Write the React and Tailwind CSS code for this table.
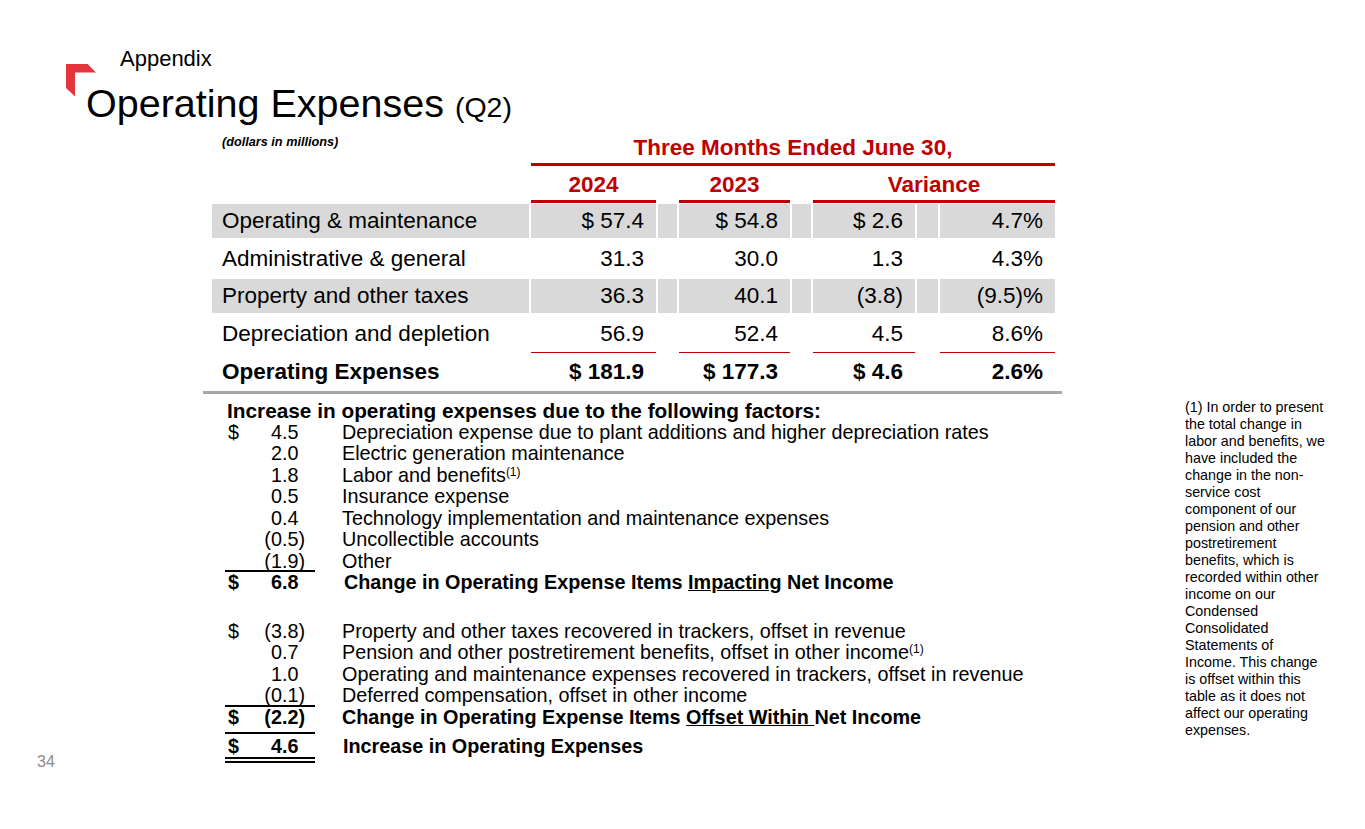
import React from 'react';

const cols = 'grid grid-cols-[317px_125px_19px_111px_19px_102px_21px_115px] gap-x-[2px]';

const rows = [
  { label: 'Operating & maintenance', v: ['$ 57.4', '$ 54.8', '$ 2.6', '4.7%'], shade: true },
  { label: 'Administrative & general', v: ['31.3', '30.0', '1.3', '4.3%'] },
  { label: 'Property and other taxes', v: ['36.3', '40.1', '(3.8)', '(9.5)%'], shade: true },
  { label: 'Depreciation and depletion', v: ['56.9', '52.4', '4.5', '8.6%'], rule: true },
];

const footnote = [
  '(1) In order to present',
  'the total change in',
  'labor and benefits, we',
  'have included the',
  'change in the non-',
  'service cost',
  'component of our',
  'pension and other',
  'postretirement',
  'benefits, which is',
  'recorded within other',
  'income on our',
  'Condensed',
  'Consolidated',
  'Statements of',
  'Income. This change',
  'is offset within this',
  'table as it does not',
  'affect our operating',
  'expenses.',
];

const Sup = () => <sup className="text-[12px]">(1)</sup>;

// one line of the bridge: "$", amount, description
function Line({ dollar, amount, neg, bold, rule, children, descPad = 'ml-[27px]', rowH = 'h-[21.5px]' }) {
  return (
    <div className={`flex ${rowH} leading-[21.5px] ${bold ? 'font-bold' : ''}`}>
      <div className={`w-[90px] ${rowH} flex justify-between pl-[3px] pr-[10px] ${rule ? 'border-b-2 border-black' : ''}`}>
        <span>{dollar ? '$' : ''}</span>
        <span>
          {amount}
          {!neg && <span className="invisible">)</span>}
        </span>
      </div>
      <div className={`${descPad} whitespace-nowrap`}>{children}</div>
    </div>
  );
}

function Cell({ children, shade, rule, first }) {
  return (
    <div
      className={`flex items-center ${first ? 'pl-[10px]' : 'justify-end pr-[12px]'} ${shade ? 'bg-[#d9d9d9]' : ''} ${rule ? 'border-b border-[#c00000]' : ''}`}
    >
      {children}
    </div>
  );
}

export default function App() {
  return (
    <div className="w-[1365px] h-[829px] bg-white overflow-hidden text-black font-['Liberation_Sans',Arial,sans-serif]">
      {/* header */}
      <div className="relative pt-[46px] pl-[86px]">
        <svg className="absolute left-[66px] top-[64px]" width="31" height="33" viewBox="0 0 31 33">
          <polygon points="0,0 21.6,0 30,8.4 9,8.4 9,32.4 0,24" fill="#e3353b" />
        </svg>
        <div className="pl-[34px] text-[22px] leading-[26px]">Appendix</div>
        <div className="mt-[8px] text-[39.5px] leading-[46px] whitespace-nowrap">
          Operating Expenses <span className="text-[28.5px]">(Q2)</span>
        </div>
      </div>

      {/* table */}
      <div className="ml-[212px] mt-[4px] w-[843px] text-[22.5px]">
        <div className={`${cols} h-[32px]`}>
          <div className="pl-[10px] text-[12.7px] leading-[16px] font-bold italic">(dollars in millions)</div>
          <div className="col-span-7 border-b-[3px] border-[#c00000] pt-[1px] text-center font-bold leading-[26px] text-[#c00000]">
            Three Months Ended June 30,
          </div>
        </div>
        <div className={`${cols} h-[37px] font-bold text-[#c00000] leading-[26px]`}>
          <div />
          <div className="pt-[6px] text-center border-b-[3px] border-[#c00000]">2024</div>
          <div />
          <div className="pt-[6px] text-center border-b-[3px] border-[#c00000]">2023</div>
          <div />
          <div className="col-span-3 pt-[6px] text-center border-b-[3px] border-[#c00000]">Variance</div>
        </div>
        {rows.map((r) => (
          <div key={r.label} className={`${cols} h-[37.5px] ${r.shade ? 'pt-[1px] pb-[2.5px]' : ''}`}>
            <Cell first shade={r.shade}>{r.label}</Cell>
            <Cell shade={r.shade} rule={r.rule}>{r.v[0]}</Cell>
            <Cell shade={r.shade} />
            <Cell shade={r.shade} rule={r.rule}>{r.v[1]}</Cell>
            <Cell shade={r.shade} />
            <Cell shade={r.shade} rule={r.rule}>{r.v[2]}</Cell>
            <Cell shade={r.shade} />
            <Cell shade={r.shade} rule={r.rule}>{r.v[3]}</Cell>
          </div>
        ))}
        <div className={`${cols} h-[37.5px] pt-[1px] font-bold`}>
          <Cell first>Operating Expenses</Cell>
          <Cell>$ 181.9</Cell>
          <Cell />
          <Cell>$ 177.3</Cell>
          <Cell />
          <Cell>$ 4.6</Cell>
          <Cell />
          <Cell>2.6%</Cell>
        </div>
        <div className="ml-[-9px] w-[859px] h-[3px] bg-[#a6a6a6]" />
      </div>

      {/* bridge + footnote */}
      <div className="flex pl-[37px]">
        <div className="w-[188px] flex flex-col justify-end text-[16px] leading-[18px] text-[#8c8c8c]">34</div>
        <div className="w-[960px] pt-[6px] pb-[8px] text-[19.8px]">
          <div className="pl-[2px] h-[22px] leading-[22px] text-[20.8px] font-bold whitespace-nowrap">
            Increase in operating expenses due to the following factors:
          </div>
          <Line dollar amount="4.5">Depreciation expense due to plant additions and higher depreciation rates</Line>
          <Line amount="2.0">Electric generation maintenance</Line>
          <Line amount="1.8">Labor and benefits<Sup /></Line>
          <Line amount="0.5">Insurance expense</Line>
          <Line amount="0.4">Technology implementation and maintenance expenses</Line>
          <Line amount="(0.5)" neg>Uncollectible accounts</Line>
          <Line amount="(1.9)" neg rule>Other</Line>
          <Line dollar amount="6.8" bold descPad="ml-[29px]">
            Change in Operating Expense Items <span className="underline">Impacting</span> Net Income
          </Line>

          <div className="h-[27px]" />

          <Line dollar amount="(3.8)" neg>Property and other taxes recovered in trackers, offset in revenue</Line>
          <Line amount="0.7">Pension and other postretirement benefits, offset in other income<Sup /></Line>
          <Line amount="1.0">Operating and maintenance expenses recovered in trackers, offset in revenue</Line>
          <Line amount="(0.1)" neg rule>Deferred compensation, offset in other income</Line>
          <Line dollar amount="(2.2)" neg bold rule rowH="h-[27px]">
            Change in Operating Expense Items <span className="underline">Offset Within </span>Net Income
          </Line>
          <div className="flex pt-[2px] leading-[21.5px] font-bold">
            <div className="w-[90px] h-[27.5px] flex justify-between pl-[3px] pr-[10px] border-b-[6px] border-double border-black">
              <span>$</span>
              <span>
                4.6<span className="invisible">)</span>
              </span>
            </div>
            <div className="ml-[28px] whitespace-nowrap">Increase in Operating Expenses</div>
          </div>
        </div>
        <div className="pt-[5.5px] text-[14.3px] leading-[17px] whitespace-nowrap">
          {footnote.map((l) => (
            <div key={l}>{l}</div>
          ))}
        </div>
      </div>
    </div>
  );
}
